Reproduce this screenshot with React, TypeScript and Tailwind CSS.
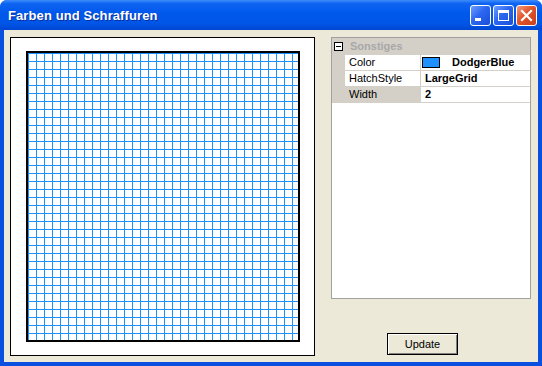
import React from 'react';

const font = { fontFamily: '"Liberation Sans", Arial, sans-serif' };

const TitleButton: React.FC<{ kind: 'min' | 'max' | 'close' }> = ({ kind }) => {
  const bg =
    kind === 'close'
      ? 'bg-[linear-gradient(135deg,#F29B7C_0%,#E2542A_45%,#C8401B_100%)]'
      : 'bg-[linear-gradient(135deg,#6E9EFF_0%,#2C66F0_45%,#1A4FD8_100%)]';
  return (
    <div className={`w-[21px] h-[21px] rounded-[3px] border border-white ${bg} flex items-center justify-center`}>
      <svg width="19" height="19" viewBox="0 0 19 19">
        {kind === 'min' && <rect x="4" y="12" width="6" height="3" fill="#fff" />}
        {kind === 'max' && (
          <>
            <rect x="4" y="4" width="11" height="3" fill="#fff" />
            <rect x="4.5" y="4.5" width="10" height="10" fill="none" stroke="#fff" strokeWidth="1" />
          </>
        )}
        {kind === 'close' && (
          <path d="M5 5 L14 14 M14 5 L5 14" stroke="#fff" strokeWidth="2.2" strokeLinecap="square" />
        )}
      </svg>
    </div>
  );
};

const PropRow: React.FC<{ label: string; selected?: boolean; children: React.ReactNode }> = ({ label, selected, children }) => (
  <div className="h-[16px] flex border-b border-[#D4D0C8]">
    <div className="w-[13px] bg-[#D4D0C8]" />
    <div
      className={`w-[76px] pl-[4px] flex items-center border-r border-[#D4D0C8] ${selected ? 'bg-[#D4D0C8]' : 'bg-white'}`}
    >
      {label}
    </div>
    <div className="flex-1 flex items-center pl-[4px] font-bold">{children}</div>
  </div>
);

export default function App() {
  return (
    <div
      className="w-[542px] h-[366px] bg-[#0A50E0] flex flex-col rounded-t-[7px] overflow-hidden text-[11px] text-black"
      style={font}
    >
      {/* title bar */}
      <div className="h-[30px] flex items-center pl-[8px] pr-[5px] bg-[linear-gradient(to_bottom,#3D8DFB_0%,#0F63F2_12%,#0058EB_45%,#0055E5_80%,#0046D2_100%)]">
        <span className="text-white font-bold text-[13px] tracking-[0.1px] [text-shadow:1px_1px_0_#0A2E9E] pt-[1px]">
          Farben und Schraffuren
        </span>
        <div className="ml-auto flex gap-[2px] pt-[1px]">
          <TitleButton kind="min" />
          <TitleButton kind="max" />
          <TitleButton kind="close" />
        </div>
      </div>

      {/* client area */}
      <div className="flex-1 mx-[4px] mb-[4px] bg-[#ECE9D8] flex pl-[6px] pt-[7px]">
        <div className="w-[305px] h-[319px] bg-white border border-black pl-[15px] pt-[13px]">
          <div className="w-[274px] h-[291px] border-2 border-black bg-white bg-[linear-gradient(to_right,#1E90FF_1px,transparent_1px),linear-gradient(to_bottom,#1E90FF_1px,transparent_1px)] bg-[size:8px_8px]" />
        </div>

        <div className="ml-[16px] w-[200px] flex flex-col">
          <div className="h-[262px] bg-white border border-[#A0A0A0] flex flex-col">
            <div className="h-[17px] bg-[#D4D0C8] flex items-center">
              <div className="ml-[2px] w-[9px] h-[9px] border border-black bg-white flex items-center justify-center">
                <div className="w-[5px] h-[1px] bg-black" />
              </div>
              <span className="ml-[7px] font-bold text-[#A8A8A8]">Sonstiges</span>
            </div>
            <PropRow label="Color">
              <div className="w-[18px] h-[11px] border border-black bg-[#1E90FF] -ml-[3px]" />
              <span className="ml-[12px]">DodgerBlue</span>
            </PropRow>
            <PropRow label="HatchStyle">LargeGrid</PropRow>
            <PropRow label="Width" selected>
              2
            </PropRow>
          </div>

          <button className="mt-[34px] ml-[56px] w-[71px] h-[22px] border border-black bg-[#ECE9D8] shadow-[inset_1px_1px_0_#fff,inset_-1px_-1px_0_#808080] flex items-center justify-center text-[11px]">
            Update
          </button>
        </div>
      </div>
    </div>
  );
}
